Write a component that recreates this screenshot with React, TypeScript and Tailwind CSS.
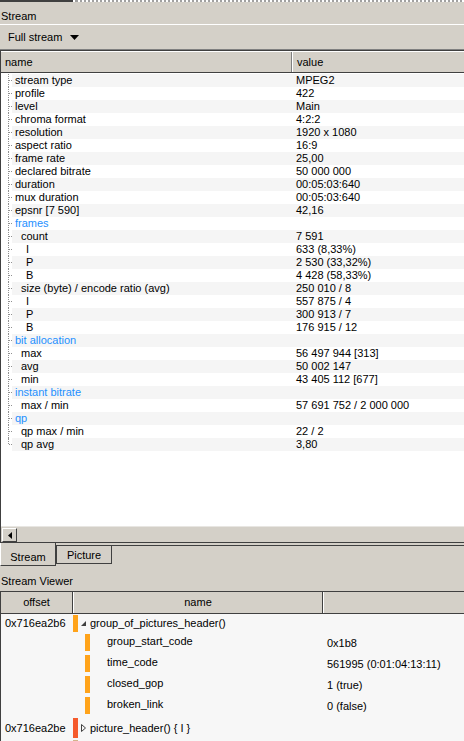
type Item = { name: string; value?: string; level: number; group?: boolean };

const items: Item[] = [
  { name: 'stream type', value: 'MPEG2', level: 0 },
  { name: 'profile', value: '422', level: 0 },
  { name: 'level', value: 'Main', level: 0 },
  { name: 'chroma format', value: '4:2:2', level: 0 },
  { name: 'resolution', value: '1920 x 1080', level: 0 },
  { name: 'aspect ratio', value: '16:9', level: 0 },
  { name: 'frame rate', value: '25,00', level: 0 },
  { name: 'declared bitrate', value: '50 000 000', level: 0 },
  { name: 'duration', value: '00:05:03:640', level: 0 },
  { name: 'mux duration', value: '00:05:03:640', level: 0 },
  { name: 'epsnr [7 590]', value: '42,16', level: 0 },
  { name: 'frames', level: 0, group: true },
  { name: 'count', value: '7 591', level: 1 },
  { name: 'I', value: '633 (8,33%)', level: 2 },
  { name: 'P', value: '2 530 (33,32%)', level: 2 },
  { name: 'B', value: '4 428 (58,33%)', level: 2 },
  { name: 'size (byte) / encode ratio (avg)', value: '250 010 / 8', level: 1 },
  { name: 'I', value: '557 875 / 4', level: 2 },
  { name: 'P', value: '300 913 / 7', level: 2 },
  { name: 'B', value: '176 915 / 12', level: 2 },
  { name: 'bit allocation', level: 0, group: true },
  { name: 'max', value: '56 497 944 [313]', level: 1 },
  { name: 'avg', value: '50 002 147', level: 1 },
  { name: 'min', value: '43 405 112 [677]', level: 1 },
  { name: 'instant bitrate', level: 0, group: true },
  { name: 'max / min', value: '57 691 752 / 2 000 000', level: 1 },
  { name: 'qp', level: 0, group: true },
  { name: 'qp max / min', value: '22 / 2', level: 1 },
  { name: 'qp avg', value: '3,80', level: 1 },
];

const indent = ['pl-[3px]', 'pl-[9px]', 'pl-[14px]'];

const fields = [
  { name: 'group_start_code', value: '0x1b8' },
  { name: 'time_code', value: '561995 (0:01:04:13:11)' },
  { name: 'closed_gop', value: '1 (true)' },
  { name: 'broken_link', value: '0 (false)' },
];

function TreeRow({ item, index, last }: { item: Item; index: number; last: boolean }) {
  return (
    <div className="flex h-[13px] leading-[13px]">
      <div className="w-[11px] flex shrink-0">
        <div className={`ml-[7px] w-[4px] flex flex-col ${last ? '' : 'border-l border-dotted border-[#909090]'}`}>
          <div className={`h-[6px] shrink-0 ${last ? 'border-l border-dotted border-[#909090]' : ''}`} />
          <div className={`border-t border-dotted border-[#909090] ${last ? 'ml-[1px]' : ''}`} />
        </div>
      </div>
      <div className={`flex flex-1 ${index % 2 === 0 ? 'bg-[#f5f5f5]' : 'bg-white'}`}>
        <div className={`w-[281px] shrink-0 whitespace-nowrap ${indent[item.level]} ${item.group ? 'text-[#1e90ff]' : 'text-black'}`}>
          {item.name}
        </div>
        <div className="pl-[3px] whitespace-nowrap text-black">{item.value}</div>
      </div>
    </div>
  );
}

export default function App() {
  return (
    <div className="w-[464px] h-[741px] overflow-hidden bg-[#d4d0c8] text-[11px] text-black font-['Liberation_Sans',Arial,sans-serif] flex flex-col">
      {/* top strip */}
      <div className="h-[2px] flex shrink-0">
        <div className="w-[73px] bg-[#404040]" />
        <div className="flex-1 border-t-2 border-dotted border-white bg-[#a0a0a0]" />
      </div>

      <div className="h-[22px] pt-[8px] pl-[1px] leading-[13px] shrink-0">Stream</div>
      <div className="h-[1px] bg-white shrink-0" />

      <div className="h-[24px] pt-[6px] pl-[8px] leading-[13px] flex items-start gap-[8px] shrink-0">
        <span>Full stream</span>
        <svg width="9" height="5" viewBox="0 0 9 5" className="mt-[4px]">
          <polygon points="0,0 9,0 4.5,5" fill="#000" />
        </svg>
      </div>

      {/* stream info table */}
      <div className="h-[493px] shrink-0 flex flex-col border-t border-[#808080]">
        <div className="flex-1 flex flex-col border-t border-l border-[#404040] bg-white">
          <div className="h-[22px] flex shrink-0 bg-[#d4d0c8] border-t border-white border-b border-b-[#404040]">
            <div className="w-[291px] pl-[4px] flex items-center border-r border-[#808080]">name</div>
            <div className="flex-1 pl-[4px] flex items-center border-l border-white">value</div>
          </div>
          <div className="flex-1 flex flex-col pt-[1px]">
            {items.map((item, i) => (
              <TreeRow key={i} item={item} index={i} last={i === items.length - 1} />
            ))}
          </div>
          <div className="h-[16px] shrink-0 bg-[#d4d0c8] border-t border-[#e8e6e2] flex items-start pl-[1px] pt-[1px]">
            <div className="w-[15px] h-[14px] border-t border-l border-white border-r border-b border-r-[#404040] border-b-[#404040] flex items-center justify-center">
              <svg width="4" height="7" viewBox="0 0 4 7">
                <polygon points="4,0 4,7 0,3.5" fill="#000" />
              </svg>
            </div>
          </div>
        </div>
      </div>

      <div className="h-[1px] bg-[#404040] shrink-0" />

      {/* tabs */}
      <div className="h-[23px] shrink-0 flex">
        <div className="w-[56px] h-[23px] border-l border-white border-r border-r-[#404040] border-b border-b-[#404040] flex justify-center pt-[8px] leading-[13px]">
          Stream
        </div>
        <div className="flex-1 flex flex-col">
          <div className="h-[2px] shrink-0" />
          <div className="border-t border-[#404040] flex">
            <div className="w-[56px] h-[18px] border-r border-b border-l border-[#404040] flex justify-center pt-[3px] leading-[13px]">
              Picture
            </div>
          </div>
        </div>
      </div>

      <div className="h-[25px] pt-[9px] pl-[1px] leading-[13px] shrink-0">Stream Viewer</div>

      {/* stream viewer table */}
      <div className="flex-1 flex flex-col border-t border-l border-[#404040] bg-[#f7f7f7]">
        <div className="h-[22px] shrink-0 flex bg-[#d4d0c8] border-b border-[#404040]">
          <div className="w-[72px] flex items-center justify-center border-r border-[#404040]">offset</div>
          <div className="w-[250px] flex items-center justify-center border-l border-white border-r border-r-[#404040]">name</div>
          <div className="flex-1 border-l border-white" />
        </div>

        <div className="h-[18px] flex shrink-0">
          <div className="w-[72px] pl-[4px] flex items-center">0x716ea2b6</div>
          <div className="w-[5px] mt-[1px] bg-[#ffa31a]" />
          <div className="flex items-center pl-[3px] gap-[4px]">
            <svg width="5" height="5" viewBox="0 0 5 5">
              <polygon points="5,0 5,5 0,5" fill="#404040" />
            </svg>
            <span>group_of_pictures_header()</span>
          </div>
        </div>

        {fields.map((f) => (
          <div key={f.name} className="h-[21px] flex shrink-0">
            <div className="w-[84px]" />
            <div className="w-[5px] my-[2px] bg-[#ffa31a]" />
            <div className="w-[233px] pl-[17px] flex items-center pb-[3px]">{f.name}</div>
            <div className="pl-[4px] pt-[5px] leading-[13px] whitespace-nowrap">{f.value}</div>
          </div>
        ))}

        <div className="h-[24px] flex shrink-0">
          <div className="w-[72px] pl-[4px] flex items-center">0x716ea2be</div>
          <div className="w-[5px] my-[2px] bg-[#f55a2c]" />
          <div className="flex items-center pl-[3px] gap-[4px]">
            <svg width="5" height="8" viewBox="0 0 5 8">
              <polygon points="0.5,0.5 4.5,4 0.5,7.5" fill="none" stroke="#404040" strokeWidth="1" />
            </svg>
            <span>picture_header() {'{ I }'}</span>
          </div>
        </div>

        <div className="h-[21px] flex shrink-0">
          <div className="w-[72px]" />
          <div className="w-[5px] bg-[#d2b48c]" />
        </div>
      </div>
    </div>
  );
}
